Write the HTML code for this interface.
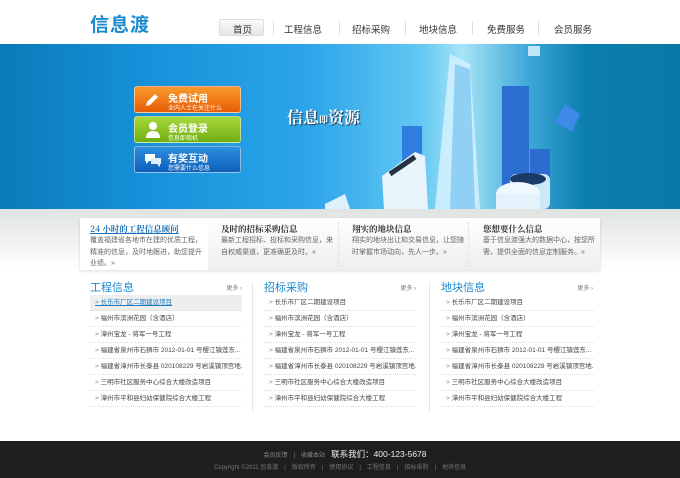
<!DOCTYPE html>
<html><head><meta charset="utf-8"><style>
*{margin:0;padding:0;box-sizing:border-box}
body{width:680px;height:478px;overflow:hidden;background:#fff;font-family:"Liberation Sans","Noto Sans CJK SC",sans-serif;position:relative}
.abs{position:absolute}
.logo{left:90px;top:10px;font-size:19px;color:#1a8ad0;font-weight:bold;letter-spacing:1px}
.nav{top:19px;font-size:9.5px;color:#333}
.nav span{position:absolute;top:0;white-space:nowrap}
.sep{width:1px;height:14px;background:#ddd;top:21px}
.banner{left:0;top:44px;width:680px;height:165px;background:linear-gradient(90deg,#0a7ab8 0%,#1590d8 20%,#2ba4ea 45%,#63c8f2 62%,#a8e4f8 68%,#3aa6d6 78%,#0b7fae 86%,#0a78a6 100%)}
.grad{left:0;top:209px;width:680px;height:60px;background:linear-gradient(#dfe3e2,#fff)}
.btn{left:134px;width:107px;height:27px;border-radius:3px;color:#fff;border:1px solid rgba(255,255,255,.5)}
.btn b{position:absolute;left:33px;top:3px;font-size:10px;font-weight:bold}
.btn i{position:absolute;left:33px;top:16px;font-size:6px;font-style:normal}
.bt{left:287px;top:105px;color:#fff;font-size:16px;font-weight:bold;font-family:"Noto Serif CJK SC",serif;text-shadow:1px 1px 1px #234}
.box{top:218px;height:52px;background:#fff;box-shadow:0 1px 3px rgba(0,0,0,.15)}
.feat{top:224px;width:118px;font-size:7px;color:#666;line-height:11.5px}
.feat h4{font-size:8.5px;color:#333;margin-bottom:0;line-height:11px;font-family:"Noto Serif CJK SC",serif}
.col{top:279px;width:152px}
.col h3{font-size:11px;color:#1c8bd0;font-weight:normal;height:14px}
.more{position:absolute;right:0;top:4px;font-size:6px;color:#777}
.col ul{list-style:none;margin-top:2px}
.col li{height:16px;line-height:16px;font-size:6.5px;color:#444;border-bottom:1px dotted #ddd;padding-left:5px;white-space:nowrap;overflow:hidden}
.col li:before{content:"> ";color:#888}
.col li.a{background:#eee;color:#1a7bc0;text-decoration:underline}
.vl{top:282px;width:1px;height:130px;background:#e6e6e6}
.foot{left:0;top:441px;width:680px;height:37px;background:#1e1e1e}
</style></head><body>
<div class="abs logo">信息渡</div>
<div class="abs" style="left:219px;top:19px;width:45px;height:17px;background:linear-gradient(#fafafa,#e6e6e6);border:1px solid #ddd;border-radius:2px"></div>
<div class="abs nav" style="left:0;width:680px">
<span style="left:233px;top:3px">首页</span><span style="left:284px;top:3px">工程信息</span><span style="left:352px;top:3px">招标采购</span><span style="left:419px;top:3px">地块信息</span><span style="left:487px;top:3px">免费服务</span><span style="left:554px;top:3px">会员服务</span></div>
<div class="abs sep" style="left:273px"></div><div class="abs sep" style="left:339px"></div><div class="abs sep" style="left:405px"></div><div class="abs sep" style="left:472px"></div><div class="abs sep" style="left:538px"></div>
<div class="abs banner"></div>
<svg class="abs" style="left:320px;top:44px" width="260" height="165">
<polygon points="130,10 150,20 160,165 115,165" fill="#cfefff" opacity=".9"/>
<polygon points="135,20 150,25 155,165 130,165" fill="#8fd0f4"/>
<rect x="182" y="42" width="27" height="100" fill="#2a6fcf"/>
<rect x="82" y="82" width="20" height="40" fill="#2f7de0"/>
<rect x="210" y="105" width="20" height="30" fill="#2e6bd0"/>
<path d="M62 132 L95 108 L105 112 L108 165 L64 165Z" fill="#e8f4fc"/>
<path d="M70 130 L95 113" stroke="#234" stroke-width="5"/>
<rect x="190" y="130" width="40" height="35" rx="6" fill="#cde8f8"/>
<ellipse cx="208" cy="135" rx="18" ry="6" fill="#1b3a66"/>
<ellipse cx="198" cy="150" rx="22" ry="12" fill="#f0f8fd"/><rect x="176" y="150" width="44" height="15" fill="#e4f2fb"/>
<polygon points="245,60 260,70 252,88 235,78" fill="#3e8ae8"/>
<rect x="208" y="2" width="12" height="10" fill="#bfe6fb"/>
<polygon points="5,160 25,150 30,165 5,165" fill="#e0f0fb"/>
</svg>
<div class="abs bt">信息<span style="font-size:9px">即</span>资源</div>
<div class="abs btn" style="top:86px;background:linear-gradient(#f99a2c,#e65d06)"><svg class="abs" style="left:9px;top:5px" width="16" height="16"><path d="M2 14 L3 10 L11 2 L14 5 L6 13Z" fill="#fff"/></svg><b>免费试用</b><i>业内人士在关注什么</i></div>
<div class="abs btn" style="top:116px;background:linear-gradient(#a8d83c,#6fae12)"><svg class="abs" style="left:10px;top:4px" width="16" height="18"><circle cx="8" cy="5" r="4" fill="#fff"/><path d="M1 17 Q1 10 8 10 Q15 10 15 17Z" fill="#fff"/></svg><b>会员登录</b><i>信息即商机</i></div>
<div class="abs btn" style="top:146px;background:linear-gradient(#2e8fe0,#0d5fb8)"><svg class="abs" style="left:9px;top:5px" width="18" height="16"><path d="M1 2 H11 V9 H5 L2 12 V9 H1Z" fill="#fff"/><path d="M7 6 H17 V12 H16 V15 L13 12 H7Z" fill="#e0eef9"/></svg><b>有奖互动</b><i>您需要什么信息</i></div>
<div class="abs grad"></div>
<div class="abs box" style="left:80px;width:520px"></div>
<div class="abs" style="left:208px;top:218px;width:392px;height:52px;background:linear-gradient(#fff,#eee)"></div>
<div class="abs" style="left:338px;top:222px;width:1px;height:44px;border-left:1px dotted #ddd"></div>
<div class="abs" style="left:468px;top:222px;width:1px;height:44px;border-left:1px dotted #ddd"></div>
<div class="abs feat" style="left:90px"><h4 style="color:#1a6fb8;text-decoration:underline">24 小时的工程信息顾问</h4>覆盖福建省各地市在建的优质工程，精准的信息，及时地跟进，助您提升业绩。»</div>
<div class="abs feat" style="left:221px"><h4>及时的招标采购信息</h4>最新工程招标、投标和采购信息，来自权威渠道，更准确更及时。»</div>
<div class="abs feat" style="left:352px"><h4>翔实的地块信息</h4>翔实的地块出让和交易信息，让您随时掌握市场动向，先人一步。»</div>
<div class="abs feat" style="left:483px"><h4>您想要什么信息</h4>基于信息渡强大的数据中心，按您所需，提供全面的信息定制服务。»</div>
<div class="abs col" style="left:90px"><h3>工程信息</h3><span class="more">更多 ›</span><ul><li class="a">长乐市厂区二期建设项目</li><li>福州市滨洲花园（含酒店）</li><li>漳州宝龙 - 将军一号工程</li><li>福建省泉州市石狮市 2012-01-01 号樱江镇莲东...</li><li>福建省漳州市长泰县 020108229 号岩溪镇顶宫地...</li><li>三明市社区服务中心综合大楼改造项目</li><li>漳州市平和县妇幼保健院综合大楼工程</li></ul></div>
<div class="abs vl" style="left:252px"></div>
<div class="abs col" style="left:264px"><h3>招标采购</h3><span class="more">更多 ›</span><ul><li>长乐市厂区二期建设项目</li><li>福州市滨洲花园（含酒店）</li><li>漳州宝龙 - 将军一号工程</li><li>福建省泉州市石狮市 2012-01-01 号樱江镇莲东...</li><li>福建省漳州市长泰县 020108229 号岩溪镇顶宫地...</li><li>三明市社区服务中心综合大楼改造项目</li><li>漳州市平和县妇幼保健院综合大楼工程</li></ul></div>
<div class="abs vl" style="left:429px"></div>
<div class="abs col" style="left:441px"><h3>地块信息</h3><span class="more">更多 ›</span><ul><li>长乐市厂区二期建设项目</li><li>福州市滨洲花园（含酒店）</li><li>漳州宝龙 - 将军一号工程</li><li>福建省泉州市石狮市 2012-01-01 号樱江镇莲东...</li><li>福建省漳州市长泰县 020108229 号岩溪镇顶宫地...</li><li>三明市社区服务中心综合大楼改造项目</li><li>漳州市平和县妇幼保健院综合大楼工程</li></ul></div>
<div class="abs foot"></div>
<div class="abs" style="left:0;top:448px;width:680px;text-align:center;font-size:6px;color:#888;white-space:nowrap"><span style="margin-left:10px">会员反馈　|　收藏本站　</span><span style="font-size:8.5px;color:#eee">联系我们：400-123-5678</span></div>
<div class="abs" style="left:0;top:462px;width:680px;text-align:center;font-size:6px;color:#777;white-space:nowrap">Copyright ©2011 信息渡　|　版权所有　|　使用协议　|　工程信息　|　招标采购　|　地块信息</div>
</body></html>
